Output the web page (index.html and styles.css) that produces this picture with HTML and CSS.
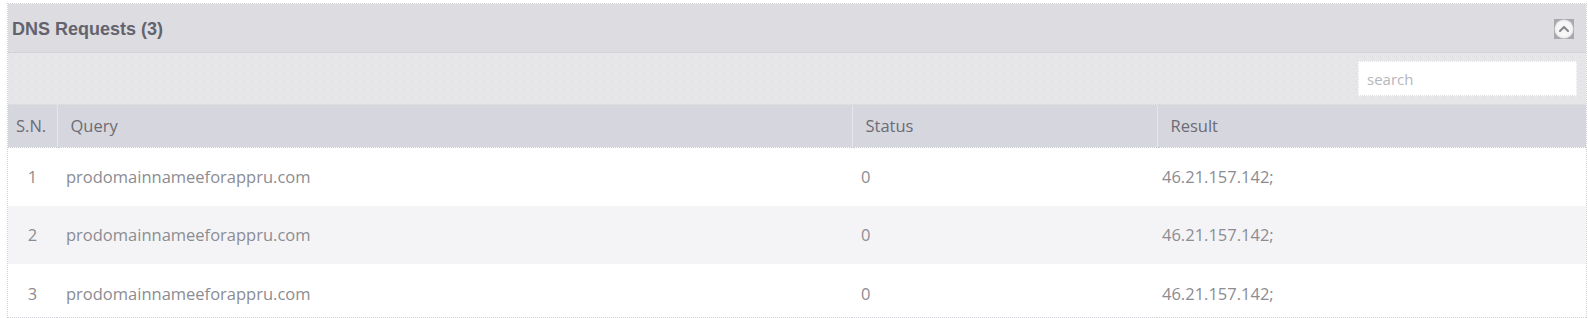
FILE: index.html
```html
<!DOCTYPE html>
<html>
<head>
<meta charset="utf-8">
<link rel="stylesheet" href="styles.css">
</head>
<body>
<div class="panel">
  <div class="panel-head">
    <span class="title">DNS Requests (3)</span>
    <svg class="toggle" width="20" height="20" viewBox="0 0 20 20">
      <rect x="0" y="0" width="20" height="20" fill="#a9a9ad"/>
      <circle cx="10" cy="10" r="9.5" fill="#e9e9ec"/>
      <circle cx="10" cy="10" r="8" fill="#f7f7f8"/>
      <path d="M6 12 L10 8 L14 12" fill="none" stroke="#8a8a90" stroke-width="2.2" stroke-linecap="round" stroke-linejoin="round"/>
    </svg>
  </div>
  <div class="toolbar">
    <input class="search" type="text" placeholder="search">
  </div>
  <table class="grid">
    <thead>
      <tr><th class="c-sn">S.N.</th><th class="c-q">Query</th><th class="c-s">Status</th><th class="c-r">Result</th></tr>
    </thead>
    <tbody>
      <tr><td class="num">1</td><td class="q">prodomainnameeforappru.com</td><td class="s">0</td><td class="r">46.21.157.142;</td></tr>
      <tr class="alt"><td class="num">2</td><td class="q">prodomainnameeforappru.com</td><td class="s">0</td><td class="r">46.21.157.142;</td></tr>
      <tr class="last"><td class="num">3</td><td class="q">prodomainnameeforappru.com</td><td class="s">0</td><td class="r">46.21.157.142;</td></tr>
    </tbody>
  </table>
</div>
</body>
</html>
```
FILE: styles.css
```css
html, body {
  margin: 0;
  padding: 0;
  background: #ffffff;
}
body {
  padding: 3px 1px 0 7px;
  font-family: "Open Sans", "Liberation Sans", sans-serif;
}
.panel {
  border: 1px dotted #d2d2d6;
  border-bottom: none;
  background: #fff;
}
.panel-head {
  height: 48px;
  background: #dddde1;
  border-bottom: 1px dotted #cacacf;
  display: flex;
  align-items: center;
  justify-content: space-between;
  padding: 0 12px 0 4px;
}
.title {
  font-family: "Liberation Sans", Arial, sans-serif;
  font-weight: bold;
  font-size: 18px;
  color: #63636e;
  margin-top: 2px;
}
.toggle {
  display: block;
  margin-top: 1px;
}
.toolbar {
  height: 51px;
  background-color: #e6e6e9;
  background-image: radial-gradient(#dcdce0 0.6px, transparent 0.8px);
  background-size: 8px 8px;
  border-bottom: 1px dotted #d5d5da;
  display: flex;
  align-items: center;
  justify-content: flex-end;
  padding-right: 9px;
}
.search {
  width: 219px;
  height: 35px;
  box-sizing: border-box;
  border: 1px dotted #e2e2e6;
  background: #fff;
  padding: 0 8px;
  font-family: "Open Sans", sans-serif;
  font-size: 15px;
  color: #555;
  outline: none;
}
.search::placeholder {
  color: #b6b6be;
}
.grid {
  width: 100%;
  border-collapse: collapse;
  table-layout: fixed;
  font-size: 16.5px;
}
.grid th {
  box-sizing: border-box;
  background: #d6d6de;
  height: 42px;
  text-align: left;
  font-weight: normal;
  color: #6c6c74;
  padding: 0 0 1px 13px;
  border-left: 1px solid #e6e6ec;
  border-bottom: 1px dotted #c8c8cf;
}
.grid th:first-child {
  border-left: none;
  padding-left: 8px;
}
.c-sn { width: 49px; }
.c-q { width: 795px; }
.c-s { width: 305px; }
.grid td {
  height: 58px;
  padding: 0 0 0 9px;
  color: #8c8c92;
}
.grid td.num {
  padding: 0;
  text-align: center;
}
.grid td.r {
  padding-left: 5px;
}
.grid tr.alt td {
  background: #f4f4f6;
}
.grid tr.last td {
  height: 47px;
  padding-top: 6px;
  border-bottom: 1px dotted #d0d0d5;
}
```
